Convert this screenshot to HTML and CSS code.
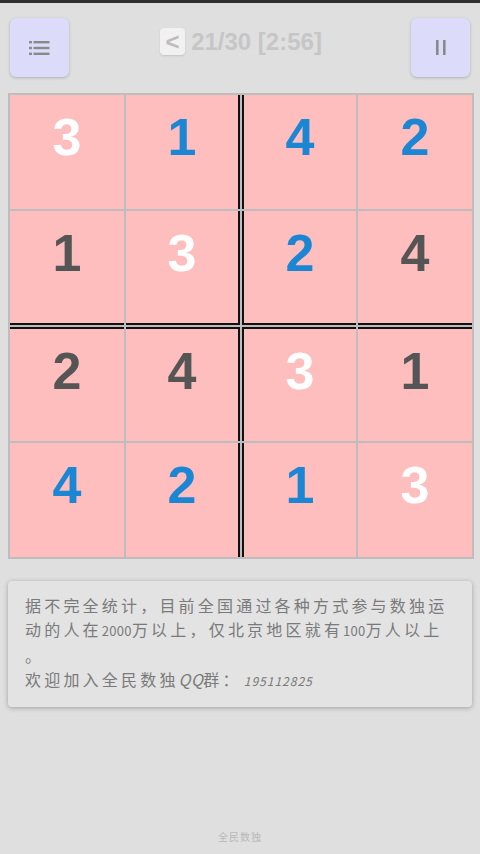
FILE: index.html
```html
<!DOCTYPE html>
<html>
<head>
<meta charset="utf-8">
<link rel="stylesheet" href="styles.css">
</head>
<body>
<div class="statusbar"></div>
<header class="topbar">
  <button class="btn">
    <svg width="22" height="16" viewBox="0 0 22 16">
      <g fill="#8a8a8a">
        <rect x="0" y="1" width="3" height="2.4"/>
        <rect x="4.5" y="1" width="16" height="2.4"/>
        <rect x="0" y="6.8" width="3" height="2.4"/>
        <rect x="4.5" y="6.8" width="16" height="2.4"/>
        <rect x="0" y="12.6" width="3" height="2.4"/>
        <rect x="4.5" y="12.6" width="16" height="2.4"/>
      </g>
    </svg>
  </button>
  <div class="title">
    <span class="back">&lt;</span>
    <span class="prog">21/30 [2:56]</span>
  </div>
  <button class="btn">
    <svg width="12" height="16" viewBox="0 0 12 16">
      <g fill="#8a8a8a">
        <rect x="1" y="0" width="2.6" height="15"/>
        <rect x="8" y="0" width="2.6" height="15"/>
      </g>
    </svg>
  </button>
</header>

<div class="board">
  <div class="cell w">3</div>
  <div class="cell b br">1</div>
  <div class="cell b bl">4</div>
  <div class="cell b">2</div>

  <div class="cell d bb">1</div>
  <div class="cell w br bb">3</div>
  <div class="cell b bl bb">2</div>
  <div class="cell d bb">4</div>

  <div class="cell d bt">2</div>
  <div class="cell d br bt">4</div>
  <div class="cell w bl bt">3</div>
  <div class="cell d bt">1</div>

  <div class="cell b">4</div>
  <div class="cell b br">2</div>
  <div class="cell b bl">1</div>
  <div class="cell w">3</div>
</div>

<div class="card">
  <p class="line">据不完全统计，目前全国通过各种方式参与数独运</p>
  <p class="line">动的人在<span class="dg">2000</span>万以上，仅北京地区就有<span class="dg">100</span>万人以上</p>
  <p class="line">。</p>
  <p class="line">欢迎加入全民数独<span class="qq">QQ</span>群：<span class="num">195112825</span></p>
</div>

<footer class="footer">全民数独</footer>
</body>
</html>
```

FILE: styles.css
```css
html, body {
  margin: 0;
  padding: 0;
}
body {
  width: 480px;
  height: 854px;
  background: #dfdfdf;
  font-family: "Liberation Sans", Arial, "Noto Sans CJK SC", sans-serif;
  position: relative;
  overflow: hidden;
}
.statusbar {
  height: 3px;
  background: #2f2f2f;
}
.topbar {
  display: flex;
  justify-content: space-between;
  align-items: flex-start;
  padding: 15px 10px 0 10px;
  height: 75px;
  box-sizing: border-box;
}
.btn {
  width: 59px;
  height: 59px;
  border: none;
  border-radius: 6px;
  background: #dcdcfa;
  box-shadow: 0 1px 3px rgba(0,0,0,0.22);
  display: flex;
  align-items: center;
  justify-content: center;
  padding: 0;
  margin: 0;
}
.title {
  display: flex;
  align-items: center;
  gap: 6px;
  margin-top: 10px;
  margin-left: 2px;
}
.back {
  width: 25px;
  height: 27px;
  border-radius: 4px;
  background: #f1f1f1;
  box-shadow: 0 1px 2px rgba(0,0,0,0.12);
  color: #bdbdbd;
  font-weight: bold;
  font-size: 24px;
  line-height: 27px;
  text-align: center;
}
.prog {
  color: #c6c6c6;
  font-weight: bold;
  font-size: 24px;
  line-height: 27px;
}
.board {
  margin: 15px 0 0 8px;
  width: 466px;
  box-sizing: border-box;
  background: #bdbdbd;
  padding: 2px;
  display: grid;
  grid-template-columns: repeat(4, 1fr);
  grid-auto-rows: 114px;
  gap: 2px;
}
.cell {
  background: #ffbebe;
  font-size: 52px;
  font-weight: bold;
  line-height: 52px;
  text-align: center;
  padding-top: 16px;
  box-sizing: border-box;
}
.cell.w { color: #ffffff; }
.cell.b { color: #1b87d4; }
.cell.d { color: #555555; }
.cell.br { border-right: 2px solid #111; }
.cell.bl { border-left: 2px solid #111; }
.cell.bb { border-bottom: 2px solid #111; }
.cell.bt { border-top: 2px solid #111; }

.card {
  margin: 22px 8px 0 8px;
  background: #e3e3e3;
  border-radius: 4px;
  box-shadow: 0 1px 5px rgba(0,0,0,0.28);
  padding: 12px 10px 14px 17px;
  height: 126px;
  box-sizing: border-box;
}
.line {
  margin: 0;
  font-family: "Noto Sans CJK SC", sans-serif;
  font-size: 16px;
  line-height: 24px;
  letter-spacing: 3.2px;
  color: #7a7a7a;
  white-space: nowrap;
}
.dg {
  font-size: 13px;
  letter-spacing: 0.3px;
}
.qq {
  font-style: italic;
  letter-spacing: 0.5px;
}
.num {
  font-style: italic;
  font-size: 12px;
  letter-spacing: 1px;
  margin-left: 2px;
}
.footer {
  position: absolute;
  left: 0;
  right: 0;
  top: 829px;
  text-align: center;
  font-family: "Noto Sans CJK SC", sans-serif;
  font-size: 10px;
  color: #b9b9b9;
  letter-spacing: 1px;
}
```
